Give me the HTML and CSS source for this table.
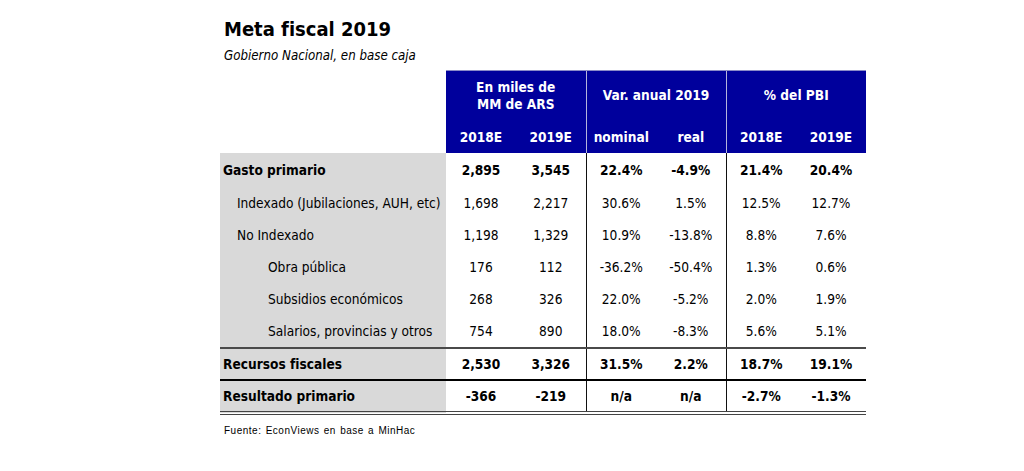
FILE: index.html
```html
<!DOCTYPE html>
<html lang="es">
<head>
<meta charset="utf-8">
<title>Meta fiscal 2019</title>
<link rel="stylesheet" href="styles.css">
</head>
<body>
<div class="wrap">
  <h1 class="title">Meta fiscal 2019</h1>
  <p class="subtitle">Gobierno Nacional, en base caja</p>
  <table class="fiscal">
    <colgroup>
      <col class="c-label"><col class="c-num"><col class="c-num"><col class="c-num"><col class="c-num"><col class="c-num"><col class="c-num">
    </colgroup>
    <thead>
      <tr class="h1">
        <th class="blank" rowspan="2"></th>
        <th colspan="2" class="grp">En miles de<br>MM de ARS</th>
        <th colspan="2" class="grp sep">Var. anual 2019</th>
        <th colspan="2" class="grp sep">% del PBI</th>
      </tr>
      <tr class="h2">
        <th>2018E</th><th>2019E</th>
        <th class="sep">nominal</th><th>real</th>
        <th class="sep">2018E</th><th>2019E</th>
      </tr>
    </thead>
    <tbody>
      <tr class="bold tall">
        <td class="lbl">Gasto primario</td><td>2,895</td><td>3,545</td><td class="sep">22.4%</td><td>-4.9%</td><td class="sep">21.4%</td><td>20.4%</td>
      </tr>
      <tr class="tall">
        <td class="lbl ind1">Indexado (Jubilaciones, AUH, etc)</td><td>1,698</td><td>2,217</td><td class="sep">30.6%</td><td>1.5%</td><td class="sep">12.5%</td><td>12.7%</td>
      </tr>
      <tr>
        <td class="lbl ind1">No Indexado</td><td>1,198</td><td>1,329</td><td class="sep">10.9%</td><td>-13.8%</td><td class="sep">8.8%</td><td>7.6%</td>
      </tr>
      <tr>
        <td class="lbl ind2">Obra pública</td><td>176</td><td>112</td><td class="sep">-36.2%</td><td>-50.4%</td><td class="sep">1.3%</td><td>0.6%</td>
      </tr>
      <tr>
        <td class="lbl ind2">Subsidios económicos</td><td>268</td><td>326</td><td class="sep">22.0%</td><td>-5.2%</td><td class="sep">2.0%</td><td>1.9%</td>
      </tr>
      <tr>
        <td class="lbl ind2">Salarios, provincias y otros</td><td>754</td><td>890</td><td class="sep">18.0%</td><td>-8.3%</td><td class="sep">5.6%</td><td>5.1%</td>
      </tr>
      <tr class="bold rec">
        <td class="lbl">Recursos fiscales</td><td>2,530</td><td>3,326</td><td class="sep">31.5%</td><td>2.2%</td><td class="sep">18.7%</td><td>19.1%</td>
      </tr>
      <tr class="bold res">
        <td class="lbl">Resultado primario</td><td>-366</td><td>-219</td><td class="sep">n/a</td><td>n/a</td><td class="sep">-2.7%</td><td>-1.3%</td>
      </tr>
    </tbody>
  </table>
  <p class="source">Fuente: EconViews en base a MinHac</p>
</div>
</body>
</html>
```
FILE: styles.css
```css
html, body {
  margin: 0;
  padding: 0;
  background: #ffffff;
}

body {
  font-family: "DejaVu Sans", Tahoma, sans-serif;
  font-stretch: condensed;
  color: #000;
}

.wrap {
  margin-left: 220px;
  width: 646px;
  padding-top: 16px;
}

.title {
  margin: 0 0 0 4px;
  font-size: 20px;
  line-height: 26px;
  font-weight: bold;
}

.subtitle {
  margin: 6px 0 0 4px;
  font-size: 13.2px;
  line-height: 16px;
  font-style: italic;
}

.fiscal {
  margin-top: 6px;
  border-collapse: collapse;
  table-layout: fixed;
  width: 646px;
  font-size: 13.6px;
}

.c-label { width: 226px; }
.c-num { width: 70px; }

.fiscal th {
  background: #00009c;
  color: #fff;
  font-weight: bold;
  text-align: center;
  padding: 0;
  border: none;
}

.fiscal th.blank {
  background: #fff;
}

.h1 th.grp {
  height: 49px;
  line-height: 17px;
  border-top: 1px solid #8b8bc8;
}

.h2 th {
  height: 32px;
  line-height: 16px;
  padding-top: 1px;
}

.fiscal th.sep {
  border-left: 1px solid #b4b4dc;
}

.fiscal td {
  height: 32px;
  padding: 0;
  text-align: center;
  line-height: 16px;
}

.fiscal .tall td {
  height: 33px;
}

.fiscal .rec td,
.fiscal .res td {
  height: 30px;
}

.fiscal td.sep {
  border-left: 1px solid #111;
}

.fiscal td.lbl {
  text-align: left;
  background: #d9d9d9;
  padding-left: 3px;
}

.fiscal td.ind1 { padding-left: 17px; }
.fiscal td.ind2 { padding-left: 48px; }

.bold td {
  font-weight: bold;
}

.rec td {
  border-top: 2px solid #4a4a4a;
}

.res td {
  border-top: 2px solid #000;
  border-bottom: 4px double #444;
}

.source {
  margin: 10px 0 0 4px;
  font-family: "Liberation Sans", Arial, sans-serif;
  font-stretch: normal;
  font-size: 10px;
  letter-spacing: 0.5px;
  word-spacing: 1px;
}
```
